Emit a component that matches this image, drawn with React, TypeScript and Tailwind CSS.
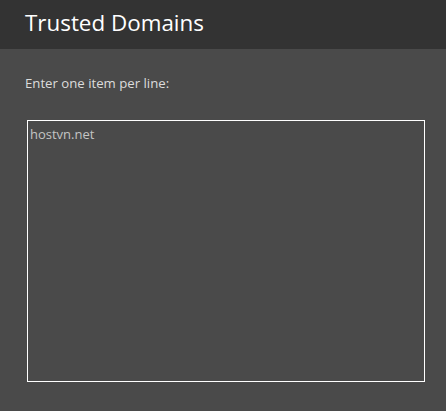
export default function App() {
    return (
        <div className="w-[446px] h-[411px] bg-[#4a4a4a] flex flex-col font-['Open_Sans','Noto_Sans',sans-serif] overflow-hidden">
            {/* Header */}
            <div className="h-[49px] bg-[#333333] flex items-center pl-[25px] shrink-0">
                <h1 className="text-[22.4px] leading-none text-white -mt-[3px]">Trusted Domains</h1>
            </div>

            {/* Body */}
            <div className="flex flex-col pl-[25px] pt-[25px]">
                <p className="text-[13.2px] leading-[18px] text-[#dcdcdc]">Enter one item per line:</p>
                <textarea
                    defaultValue="hostvn.net"
                    spellCheck={false}
                    className="mt-[28px] ml-[2px] w-[398px] h-[262px] border border-white bg-transparent text-[13px] leading-[18px] text-[#c4c4c4] px-[2px] pt-[4px] outline-none resize-none"
                />
            </div>
        </div>
    );
}
